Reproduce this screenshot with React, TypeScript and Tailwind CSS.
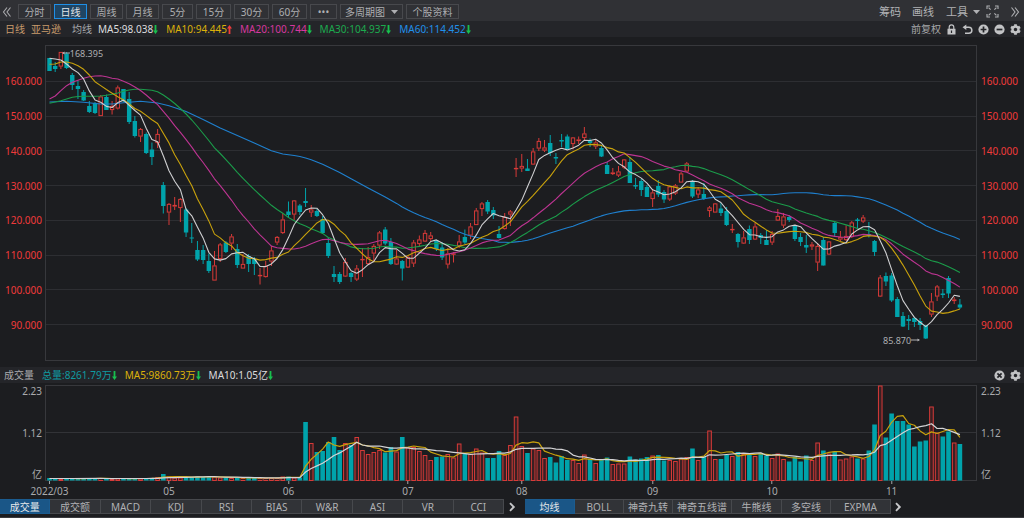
import React from "react";
import { FaCog } from "react-icons/fa";

type Candle = [string, number, number, number, number, number];

// direction, high, body top, body bottom, low, volume top (all in plot units, y grows downwards)
const CANDLES: Candle[] = [
  ["g", 58, 58, 71, 71, 478], ["g", 62, 66, 69, 72, 478.5], ["r", 52, 52, 66.5, 69, 479], ["g", 52, 53.5, 68, 69, 478.5],
  ["g", 73, 75, 85, 90, 478.5], ["g", 80.5, 86, 89, 99, 478.5], ["g", 90, 92, 100.5, 101, 478.5], ["g", 101, 106, 112, 113, 478.5],
  ["g", 102, 103, 113, 114, 478.5], ["r", 95, 96.5, 116, 116, 478], ["g", 94.5, 97, 110, 110, 478.5], ["r", 101, 106, 110, 114.5, 479],
  ["r", 85.5, 87.5, 108.5, 109.5, 478.5], ["g", 89, 89, 101, 102, 478.5], ["g", 92, 99, 122, 124, 478.5], ["g", 116, 121, 136, 137.5, 478.5],
  ["r", 128, 129, 136.5, 142, 478.5], ["g", 132.5, 134, 153, 154, 478.5], ["g", 142.5, 149.5, 157, 165, 478], ["r", 129, 134, 143, 148, 477],
  ["g", 182, 185, 206, 213.5, 474], ["r", 203, 204, 212.5, 225, 476.5], ["r", 197, 205, 206.5, 210, 477.5], ["r", 198, 199, 208, 222, 477.5],
  ["g", 208, 209.5, 232.5, 237, 477], ["g", 223, 237.5, 238.5, 243, 477], ["g", 241, 250, 259.5, 261, 476.5], ["g", 245, 250, 260, 264, 477],
  ["g", 253.5, 261, 271, 273, 477], ["r", 251, 265.5, 280.5, 280.5, 476.5], ["r", 243, 244.5, 259, 262, 477.5], ["g", 241, 242.5, 252, 253, 477.5],
  ["r", 234, 236.5, 243.5, 250, 478], ["g", 244, 249, 265, 268, 478], ["r", 254, 264, 268.5, 268.5, 478], ["g", 254, 256, 264, 272, 478],
  ["g", 257, 259, 264, 275, 478], ["r", 268, 275, 276, 284.5, 478], ["r", 261, 266, 277, 277.5, 478], ["r", 246, 250.5, 261.5, 266, 478],
  ["r", 236, 237, 242.5, 245, 478], ["r", 213, 219.5, 233, 234, 476.5], ["g", 201.5, 211.5, 215, 218, 476.5], ["r", 200, 200.5, 214.5, 220, 477.5],
  ["g", 204, 205.5, 212, 215, 477.5], ["g", 188, 201, 203, 207, 422], ["r", 205, 209.5, 212.5, 217, 443], ["g", 209, 211, 216, 217, 452],
  ["g", 216, 219, 233, 234, 451], ["g", 238, 243, 256, 258, 442], ["g", 266, 274, 277, 282, 437], ["g", 272, 274, 282, 284, 450],
  ["r", 258, 262, 276.5, 277, 443], ["g", 272, 273, 277, 282, 445], ["r", 265, 268.5, 279.5, 281, 437], ["r", 248, 259, 260, 277, 450],
  ["r", 247, 257, 264, 265, 454], ["r", 244, 246, 253.5, 261, 452], ["r", 231, 232.5, 245.5, 249, 450], ["g", 227, 229.5, 243.5, 245, 452.5],
  ["g", 238, 242, 264, 265, 447], ["r", 250, 258.5, 264.5, 265, 451.5], ["g", 260, 261, 268.5, 280.5, 437], ["r", 255, 257, 267.5, 268, 447.5],
  ["r", 240, 242.5, 263.5, 267, 447], ["r", 235.5, 239.5, 244, 246, 451], ["r", 230, 233, 241.5, 242, 455], ["r", 232, 235.5, 239, 241, 460],
  ["g", 240, 240.5, 249, 251, 457], ["g", 242, 247.5, 257.5, 260, 456.5], ["r", 248, 253.5, 264.5, 268.5, 454], ["r", 252, 253.5, 254.5, 262.5, 457.5],
  ["r", 235, 241.5, 246, 248, 443.5], ["g", 229.5, 237, 242.5, 244, 454], ["r", 223, 226.5, 235.5, 239, 454], ["r", 208, 210.5, 225, 225, 448.5],
  ["r", 202, 203.5, 209, 216, 452.5], ["g", 200, 202, 211.5, 214, 458], ["g", 207, 210, 215.5, 219, 458], ["g", 226, 234, 238, 238.5, 451],
  ["r", 213, 217, 229, 229.5, 455], ["r", 210, 211.5, 214.5, 226, 445], ["r", 158, 168, 169, 177, 416.5], ["r", 154, 166, 168.5, 172, 446],
  ["g", 159, 168.5, 171, 171, 453], ["r", 148, 151.5, 164.5, 165, 448.5], ["r", 138, 141, 148.5, 151, 450], ["r", 140, 147.5, 150.5, 152, 458],
  ["g", 135, 143, 153, 156, 457], ["g", 153, 157, 158.5, 164, 462.5], ["g", 134, 140, 141.5, 147, 456], ["g", 134.5, 136.5, 149, 149.5, 460],
  ["r", 137, 137.5, 144, 149.5, 460], ["r", 136.5, 139.5, 141, 144, 463], ["r", 127, 133.5, 138, 140, 454.5], ["g", 138.5, 140.5, 143, 147, 459],
  ["r", 140, 142.5, 146.5, 149, 463], ["g", 146, 148, 156.5, 157, 460], ["g", 162, 165, 174, 174, 457.5], ["r", 168, 172.5, 174, 175, 464],
  ["r", 166, 171.5, 175.5, 177, 463.5], ["r", 159, 159.5, 167.5, 169, 463.5], ["g", 157, 162, 183, 183, 456.5], ["g", 178, 185, 186.5, 189, 459.5],
  ["g", 179, 181, 190, 196, 458.5], ["g", 185, 187, 197, 197, 457], ["r", 190, 192.5, 199, 207, 455.5], ["g", 180, 186, 194.5, 197, 455],
  ["g", 190, 192, 199.5, 203, 460.5], ["r", 185.5, 186.5, 199.5, 201, 460], ["r", 184, 185.5, 193.5, 195, 461], ["r", 172, 173.5, 182.5, 182.5, 458.5],
  ["r", 162, 163.5, 171.5, 172, 457], ["g", 180, 181, 196.5, 198, 448.5], ["r", 187, 189.5, 194.5, 198, 460], ["g", 183, 194, 199, 200, 456.5],
  ["r", 206, 207.5, 211, 217, 430.5], ["r", 203, 203.5, 212.5, 212.5, 459], ["g", 203, 208.5, 213, 216, 459], ["g", 207, 211, 225, 226, 455],
  ["r", 224, 229, 230, 233, 456], ["g", 233, 234, 242, 247.5, 452], ["r", 231, 237.5, 243.5, 244, 454], ["g", 225.5, 229, 240, 244, 453.5],
  ["r", 223, 226.5, 239.5, 240, 456], ["g", 233, 235, 238, 244, 453], ["g", 230, 240, 245, 245, 455.5], ["r", 231, 234, 242.5, 245, 458],
  ["r", 209, 216, 220.5, 221, 453.5], ["r", 213, 216.5, 225.5, 228, 459], ["g", 215, 217, 220, 222, 461.5], ["g", 225, 226, 239, 241, 457],
  ["g", 233, 237, 242, 246, 461.5], ["g", 235, 245, 247.5, 253, 455.5], ["r", 242, 244.5, 246.5, 250, 460], ["r", 243, 246, 262.5, 271, 442.5],
  ["g", 237, 240, 265.5, 265.5, 450.5], ["r", 241, 241.5, 254.5, 255, 453.5], ["g", 221, 223, 233, 237, 451.5], ["r", 231, 237, 239.5, 241, 459.5],
  ["r", 225.5, 236, 240, 241, 458.5], ["r", 221, 222.5, 237, 238, 456.5], ["g", 218, 219.5, 221, 228, 458.5], ["r", 215, 217.5, 221.5, 223, 458.5],
  ["g", 222, 234, 235.5, 237.5, 450.5], ["g", 240, 241, 252, 256, 424.5], ["r", 275, 277.5, 296.5, 297, 385.5], ["g", 272.5, 276, 281.5, 286, 437.5],
  ["g", 273, 275.5, 300.5, 302, 413.5], ["g", 297, 299, 317, 317, 421], ["g", 312, 316, 326.5, 327, 421], ["g", 315, 319, 321, 330, 424.5],
  ["g", 317, 318, 322, 327, 446.5], ["g", 318, 321, 325, 330, 441.5], ["g", 325, 325, 338.5, 339, 440.5], ["r", 293, 301.5, 314.5, 317, 406.5],
  ["r", 285, 286.5, 296.5, 301, 432.5], ["g", 289, 293.5, 295, 298, 436.5], ["g", 276, 278, 293.5, 298, 431.5], ["r", 297, 299.5, 301, 304, 442.5],
  ["g", 299, 304.5, 307.5, 309, 444],
];

// Averages that reach back before the first candle: [index, value] knots
const LEAD_5: number[][] = [[0, 58.3], [1, 59], [2, 60], [3, 64]];
const LEAD_10: number[][] = [[0, 64.3], [1, 64], [2, 62], [3, 62], [4, 63.3], [5, 65.7], [6, 69.3], [7, 75], [8, 81.7]];
const LEAD_20: number[][] = [
  [0, 99], [1, 96], [2, 90.7], [3, 85.7], [4, 82.3], [5, 80.3], [6, 78.3], [7, 76.7], [8, 76], [9, 75.7], [10, 76.7],
  [11, 78.3], [12, 79], [13, 81.3], [14, 83.7], [15, 87], [16, 90.5], [17, 95], [18, 100],
];
const LEAD_30: number[][] = [
  [0, 103.3], [1, 102], [2, 100.7], [3, 99], [4, 97.3], [5, 96.5], [6, 96.3], [8, 96.3], [9, 96], [10, 95.3], [11, 94.3],
  [12, 93], [13, 91.3], [14, 90], [15, 89.3], [16, 89.3], [17, 89.7], [18, 90.3], [19, 91.7], [20, 95], [21, 99],
  [22, 103.5], [23, 108.5], [24, 114], [25, 120], [26, 126.5], [27, 133.5], [28, 140.5],
];
const LEAD_60: number[][] = [
  [0, 102], [3, 101.3], [6, 102.3], [9, 104], [11, 104], [13, 102.7], [16, 101.3], [19, 103], [21, 105.7], [24, 111.5],
  [27, 119.5], [30, 128], [33, 135.5], [36, 143], [39, 150.8], [41, 154], [43, 155.5], [44, 156.5], [45, 158], [46, 159.8],
  [47, 162], [48, 164.3], [49, 167], [51, 172.5], [53, 178.7], [56, 188],
];
const LEAD_VOL: number[][] = [[0, 478.5], [4, 478.5]];

const STEP = 5.69;
const xAt = (i: number) => 49.5 + STEP * i;

const closes = CANDLES.map((c) => (c[0] === "g" ? c[3] : c[2]));
const volumes = CANDLES.map((c) => c[5]);

function averageLine(values: number[], period: number, lead: number[][]): string {
  const points = lead.map(([i, y]) => `${xAt(i).toFixed(1)},${y}`);
  for (let i = period - 1; i < values.length; i++) {
    let sum = 0;
    for (let k = i - period + 1; k <= i; k++) sum += values[k];
    points.push(`${xAt(i).toFixed(1)},${(sum / period).toFixed(1)}`);
  }
  return points.join(" ");
}

const PRICE_LINES = [
  { points: averageLine(closes, 60, LEAD_60), color: "#1f80cf" },
  { points: averageLine(closes, 30, LEAD_30), color: "#1b9c4a" },
  { points: averageLine(closes, 20, LEAD_20), color: "#bd3492" },
  { points: averageLine(closes, 10, LEAD_10), color: "#c9a20c" },
  { points: averageLine(closes, 5, LEAD_5), color: "#cfcfd1" },
];
const VOLUME_LINES = [
  { points: averageLine(volumes, 5, LEAD_VOL), color: "#c9a20c" },
  { points: averageLine(volumes, 10, LEAD_VOL), color: "#d4d4d6" },
];

const RED = "#d73a38";
const TEAL = "#00a3ab";

const PRICES = ["160.000", "150.000", "140.000", "130.000", "120.000", "110.000", "100.000", "90.000"];
const GRID_Y = [81.5, 116.5, 150.5, 185.5, 220.5, 255.5, 289.5, 324.5];
const MONTHS: [string, number][] = [["2022/03", 0], ["05", 21], ["06", 42], ["07", 63], ["08", 83], ["09", 106], ["10", 127], ["11", 148]];

function Arrow({ up }: { up?: boolean }) {
  return (
    <svg viewBox="0 0 5 9" className="h-[9px] w-[5px] shrink-0" aria-hidden="true">
      <path d={up ? "M2.5 0 5 3.6H3.4V9H1.6V3.6H0Z" : "M2.5 9 5 5.4H3.4V0H1.6V5.4H0Z"} fill={up ? "#f03c3c" : "#18c04e"} />
    </svg>
  );
}

function Reading({ text, color, up }: { text: string; color: string; up?: boolean }) {
  return (
    <span className={`flex items-center ${color}`}>
      {text}
      <Arrow up={up} />
    </span>
  );
}

function Chevrons({ flip, double }: { flip?: boolean; double?: boolean }) {
  return (
    <svg viewBox="0 0 10 10" className={flip ? "size-[10px] rotate-180" : "size-[10px]"} fill="none" stroke="currentColor" strokeWidth={double ? 1.1 : 1.9} aria-hidden="true">
      {double ? <path d="M1.5 .5 5 5 1.5 9.5M5 .5 8.5 5 5 9.5" /> : <path d="M3 1.2 6.8 5 3 8.8" />}
    </svg>
  );
}

function Caret() {
  return (
    <svg viewBox="0 0 7 4" className="h-1 w-[7px]" aria-hidden="true">
      <path d="M0 0H7L3.5 4Z" fill="currentColor" />
    </svg>
  );
}

function RoundIcon({ mark }: { mark: string }) {
  return (
    <svg viewBox="0 0 11 11" className="size-[11px]" aria-hidden="true">
      <circle cx="5.5" cy="5.5" r="5.1" fill="currentColor" />
      <path d={mark} stroke="#242529" strokeWidth="1.7" />
    </svg>
  );
}

const PERIODS: [string, string][] = [
  ["分时", "w-[33px]"], ["日线", "w-[33px]"], ["周线", "w-[33px]"], ["月线", "w-[33px]"], ["5分", "w-[31px]"],
  ["15分", "w-[35px]"], ["30分", "w-[35px]"], ["60分", "w-[35px]"], ["•••", "w-[27px]"], ["多周期图", "w-[63px]"], ["个股资料", "w-[53px]"],
];

function Toolbar() {
  return (
    <header className="flex h-[21px] shrink-0 items-center bg-[#303135] pt-[2px]">
      <button className="flex w-[18px] pl-[2px]" aria-label="收起"><Chevrons flip double /></button>
      <nav className="flex gap-[3px]">
        {PERIODS.map(([label, width]) => (
          <button
            key={label}
            className={`flex h-[15px] items-center justify-center gap-[6px] border ${width} ${
              label === "日线" ? "border-[#1f8fe6] bg-[#1f4564] text-[#e4e6e8]" : "border-[#48494d] bg-[#303135] text-[#aeafb2]"
            }`}
          >
            {label}
            {label === "多周期图" && <Caret />}
          </button>
        ))}
      </nav>
      <div className="ml-auto flex items-center text-[11px] text-[#b0b1b4]">
        <button className="mr-[11px]">筹码</button>
        <button className="mr-[12px]">画线</button>
        <button className="mr-[6px] flex items-center gap-[5px]">工具<Caret /></button>
        <button className="mr-[11px]" aria-label="全屏">
          <svg viewBox="0 0 13 13" className="size-[13px]" fill="none" stroke="currentColor" strokeWidth="1.1" aria-hidden="true">
            <path d="M1 4V1H4M9 1H12V4M1 9V12H4M12 9V12H9M2.6 2.6 4.6 4.6M10.4 2.6 8.4 4.6M2.6 10.4 4.6 8.4M10.4 10.4 8.4 8.4" />
          </svg>
        </button>
        <button className="mr-[4px]" aria-label="展开"><Chevrons double /></button>
      </div>
    </header>
  );
}

function AverageBar() {
  return (
    <div className="flex h-4 shrink-0 items-center bg-[#242529] pr-[3px] pl-[5px]">
      <span className="text-[#c99b6c]">日线</span>
      <span className="ml-[6px] text-[#c99b6c]">亚马逊</span>
      <span className="ml-[11px]">均线</span>
      <div className="ml-[6px] flex gap-2">
        <Reading text="MA5:98.038" color="text-[#dcdcde]" />
        <Reading text="MA10:94.445" color="text-[#dcb10a]" up />
        <Reading text="MA20:100.744" color="text-[#d6389f]" />
        <Reading text="MA30:104.937" color="text-[#1caa4e]" />
        <Reading text="MA60:114.452" color="text-[#2190ea]" />
      </div>
      <div className="ml-auto flex items-center gap-[5px] text-[#c2c3c5]">
        <button className="text-[#a6a7aa]">前复权</button>
        <button aria-label="锁定">
          <svg viewBox="0 0 11 11" className="size-[11px]" aria-hidden="true">
            <path d="M3.2 5V3.2A2.3 2.3 0 0 1 7.8 3.2V5" fill="none" stroke="currentColor" strokeWidth="1.2" />
            <path d="M1.5 4.800H9.5V10.500H1.5ZM4.900 6.500V9H6.100V6.500Z" fill="currentColor" fillRule="evenodd" />
          </svg>
        </button>
        <button aria-label="撤销">
          <svg viewBox="0 0 11 11" className="size-[11px]" aria-hidden="true">
            <path d="M2.500 3.200H6.800A3 3 0 0 1 6.800 9.300H3" fill="none" stroke="currentColor" strokeWidth="1.500" />
            <path d="M.5 3.200 4.300 .4V6Z" fill="currentColor" />
          </svg>
        </button>
        <button aria-label="放大"><RoundIcon mark="M2.6 5.5H8.4M5.5 2.6V8.4" /></button>
        <button aria-label="缩小"><RoundIcon mark="M2.6 5.5H8.4" /></button>
        <button aria-label="设置"><FaCog size={11} /></button>
      </div>
    </div>
  );
}

function PriceAxis({ side }: { side: string }) {
  return (
    <div className={`grid shrink-0 grid-rows-[19fr_repeat(8,35fr)_19fr] text-[#f03a3a] ${side}`}>
      <span />
      {PRICES.map((p) => (
        <span key={p} className="flex items-center">{p}</span>
      ))}
    </div>
  );
}

function PriceChart() {
  return (
    <section className="flex min-h-0 flex-1 pt-2 pb-[6px]" aria-label="K线图">
      <PriceAxis side="w-[45px] justify-items-end pr-[3px]" />
      <div className="relative min-w-0 flex-1">
        <svg viewBox="45 45 932 316" preserveAspectRatio="none" className="block h-full w-full" aria-hidden="true">
          {GRID_Y.map((y) => (
            <path key={y} d={`M45 ${y}H977`} stroke="#2d2e32" />
          ))}
          <rect x="45.5" y="45.5" width="931" height="315" fill="none" stroke="#37383c" />
          {CANDLES.map(([dir, high, top, bottom, low], i) => {
            const x = xAt(i);
            const height = bottom - top;
            return dir === "g" ? (
              <g key={i} fill={TEAL}>
                <rect x={x - 0.5} y={high} width="1" height={low - high} />
                <rect x={x - 2.2} y={top} width="4.4" height={height} />
              </g>
            ) : (
              <g key={i} stroke={RED} fill="none">
                <path d={`M${x} ${high}V${top}M${x} ${bottom}V${low}`} />
                <rect x={x - 1.7} y={top + 0.4} width="3.4" height={Math.max(height - 0.8, 0.4)} />
              </g>
            );
          })}
          {PRICE_LINES.map((line) => (
            <polyline key={line.color} points={line.points} fill="none" stroke={line.color} strokeWidth="1.1" strokeLinejoin="round" />
          ))}
        </svg>
        <span className="absolute top-[2.5%] left-[1.8%] flex -translate-y-1/2 items-center text-[9px] text-[#adaeb1]">
          <svg viewBox="0 0 8 5" className="h-[5px] w-2" aria-hidden="true">
            <path d="M8 2.5H1" stroke="currentColor" />
            <path d="M0 2.5 2.5 1V4Z" fill="currentColor" />
          </svg>
          168.395
        </span>
        <span className="absolute top-[93.3%] right-[6.1%] flex -translate-y-1/2 items-center text-[9px] text-[#adaeb1]">
          85.870
          <svg viewBox="0 0 9 5" className="h-[5px] w-[9px]" aria-hidden="true">
            <path d="M0 2.5H8" stroke="currentColor" />
            <path d="M9 2.5 6.5 1V4Z" fill="currentColor" />
          </svg>
        </span>
      </div>
      <PriceAxis side="w-[47px] justify-items-start pl-1" />
    </section>
  );
}

function VolumeBar() {
  return (
    <div className="flex h-4 shrink-0 items-center gap-2 bg-[#242529] pr-[3px] pl-1">
      <span>成交量</span>
      <Reading text="总量:8261.79万" color="text-[#0f9ba1]" />
      <Reading text="MA5:9860.73万" color="text-[#dcb10a]" />
      <Reading text="MA10:1.05亿" color="text-[#dcdcde]" />
      <div className="ml-auto flex items-center gap-[5px] text-[#c2c3c5]">
        <button aria-label="关闭"><RoundIcon mark="M3.4 3.4 7.6 7.6M7.6 3.4 3.4 7.6" /></button>
        <button aria-label="设置"><FaCog size={11} /></button>
      </div>
    </div>
  );
}

function VolumeAxis({ side }: { side: string }) {
  return (
    <div className={`flex shrink-0 flex-col justify-between ${side}`}>
      <span>2.23</span>
      <span>1.12</span>
      <span>亿</span>
    </div>
  );
}

function VolumeChart() {
  return (
    <section className="shrink-0 pt-[2px]" aria-label="成交量图">
      <div className="flex h-24 leading-[13px]">
        <VolumeAxis side="w-[45px] items-end pr-[3px]" />
        <svg viewBox="45 385 932 96" preserveAspectRatio="none" className="block h-full min-w-0 flex-1" aria-hidden="true">
          <path d="M45 432.5H977" stroke="#323337" />
          <rect x="45.5" y="385.5" width="931" height="95" fill="none" stroke="#37383c" />
          {CANDLES.map(([dir, , , , , top], i) =>
            dir === "g" ? (
              <rect key={i} x={xAt(i) - 2.3} y={top} width="4.6" height={480.5 - top} fill={TEAL} />
            ) : (
              <rect key={i} x={xAt(i) - 1.8} y={top + 0.5} width="3.6" height={480 - top} fill="#3a2023" stroke={RED} />
            ),
          )}
          {VOLUME_LINES.map((line) => (
            <polyline key={line.color} points={line.points} fill="none" stroke={line.color} strokeWidth="1.2" strokeLinejoin="round" />
          ))}
        </svg>
        <VolumeAxis side="w-[47px] items-start pl-1" />
      </div>
      <div className="relative mr-[47px] ml-[45px] h-[18px]">
        {MONTHS.map(([label, i]) => (
          <span
            key={label}
            className="absolute top-0 flex -translate-x-1/2 flex-col items-center leading-[14px]"
            style={{ left: `${((xAt(i) - 45) / 932) * 100}%` }}
          >
            <i className="h-[3px] w-px bg-[#a5a6a9]" />
            {label}
          </span>
        ))}
      </div>
    </section>
  );
}

const INDICATORS = ["成交量", "成交额", "MACD", "KDJ", "RSI", "BIAS", "W&R", "ASI", "VR", "CCI"];
const OVERLAYS: [string, string][] = [
  ["均线", "w-[50px]"], ["BOLL", "w-[49px]"], ["神奇九转", "w-[49px]"], ["神奇五线谱", "w-[59px]"],
  ["牛熊线", "w-[50px]"], ["多空线", "w-[49px]"], ["EXPMA", "w-[60px]"],
];

function Tab({ label, active, width }: { label: string; active: boolean; width?: string }) {
  return (
    <button
      className={`flex items-center justify-center border-y border-r whitespace-nowrap ${width ?? ""} ${
        active ? "border-[#1b5c90] bg-[#1a5687] text-[#e6e8ea]" : "border-[#47494d] bg-[#313337] text-[#b0b1b4]"
      }`}
    >
      {label}
    </button>
  );
}

function IndicatorTabs() {
  return (
    <footer className="shrink-0 border-b border-[#3a3b3f] bg-[#1c1d20] pb-[3px]">
      <div className="flex h-[15px]">
        <div className="grid w-[504px] grid-cols-10">
          {INDICATORS.map((label) => (
            <Tab key={label} label={label} active={label === "成交量"} />
          ))}
        </div>
        <button className="flex w-[21px] items-center pl-[3px] text-[#c6c7c9]" aria-label="更多指标"><Chevrons /></button>
        {OVERLAYS.map(([label, width]) => (
          <Tab key={label} label={label} width={width} active={label === "均线"} />
        ))}
        <button className="flex items-center pl-[2px] text-[#c6c7c9]" aria-label="更多叠加"><Chevrons /></button>
      </div>
    </footer>
  );
}

export default function App() {
  return (
    <main className="flex h-screen min-h-[400px] flex-col overflow-hidden bg-[#1c1d20] font-['Noto_Sans','Noto_Sans_CJK_SC',sans-serif] text-[10px] leading-none whitespace-nowrap text-[#a9aaad]">
      <Toolbar />
      <AverageBar />
      <PriceChart />
      <VolumeBar />
      <VolumeChart />
      <IndicatorTabs />
    </main>
  );
}
